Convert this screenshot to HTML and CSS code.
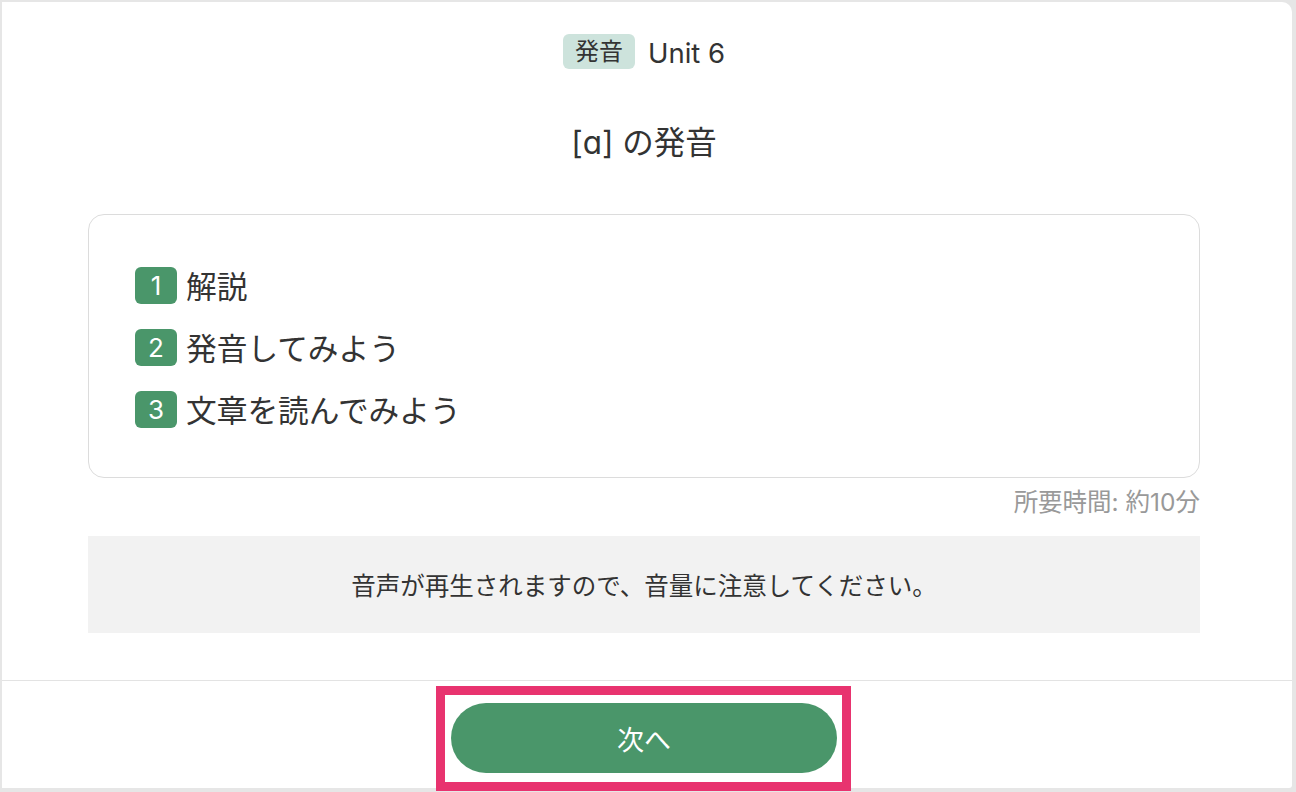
FILE: index.html
```html
<!DOCTYPE html>
<html lang="ja">
<head>
<meta charset="utf-8">
<title>[ɑ] の発音</title>
<link rel="stylesheet" href="styles.css">
</head>
<body>
<div class="panel">
  <div class="main">
    <div class="header">
      <span class="tag">発音</span>
      <span class="unit">Unit 6</span>
    </div>
    <h1 class="title">[ɑ] の発音</h1>
    <div class="card">
      <div class="step"><span class="num">1</span><span class="label">解説</span></div>
      <div class="step"><span class="num">2</span><span class="label">発音してみよう</span></div>
      <div class="step"><span class="num">3</span><span class="label">文章を読んでみよう</span></div>
    </div>
    <div class="duration">所要時間: 約10分</div>
    <div class="notice">音声が再生されますので、音量に注意してください。</div>
  </div>
  <div class="footer">
    <div class="btn-wrap">
      <button class="next">次へ</button>
      <div class="highlight"></div>
    </div>
  </div>
</div>
</body>
</html>
```
FILE: styles.css
```css
* { box-sizing: border-box; }
html, body { margin: 0; padding: 0; }
body {
  background: #e6e6e6;
  font-family: "Inter", "Noto Sans CJK JP", sans-serif;
  color: #333;
  width: 1296px;
  height: 792px;
  overflow: hidden;
  padding: 2px 4px 0 2px;
}
.panel {
  background: #fff;
  height: 786px;
  border-radius: 0 10px 3px 0;
  display: flex;
  flex-direction: column;
}
.main {
  padding: 32px 92px 0 86px;
  display: flex;
  flex-direction: column;
}
.header {
  height: 35px;
  display: flex;
  justify-content: center;
  align-items: center;
  gap: 13px;
}
.tag {
  background: #cde3dc;
  color: #333;
  font-size: 24px;
  height: 35px;
  line-height: 35px;
  padding: 0 12px;
  border-radius: 6px;
}
.unit {
  font-size: 27.5px;
  color: #333;
  position: relative;
  top: 1px;
}
.title {
  margin: 54px 0 0;
  font-weight: normal;
  font-size: 31.5px;
  line-height: 40px;
  text-align: center;
  color: #333;
}
.card {
  margin-top: 51px;
  height: 264px;
  border: 1px solid #dcdcdc;
  border-radius: 16px;
  padding: 52px 46px 0;
  display: flex;
  flex-direction: column;
  gap: 25px;
}
.step {
  display: flex;
  align-items: center;
  height: 37px;
  gap: 9px;
}
.num {
  width: 42px;
  height: 37px;
  border-radius: 6px;
  background: #4a966a;
  color: #fff;
  font-size: 26px;
  display: flex;
  align-items: center;
  justify-content: center;
}
.label {
  font-size: 30.7px;
  color: #333;
  position: relative;
  top: -1px;
}
.duration {
  margin-top: 9px;
  line-height: 30px;
  text-align: right;
  font-size: 24.5px;
  color: #999;
}
.notice {
  margin-top: 19px;
  height: 97px;
  background: #f2f2f2;
  display: flex;
  align-items: center;
  justify-content: center;
  font-size: 24.5px;
  color: #333;
}
.footer {
  margin-top: auto;
  border-top: 1px solid #e3e3e3;
  padding: 22px 92px 15px 86px;
  display: flex;
  justify-content: center;
}
.btn-wrap {
  position: relative;
  width: 386px;
  height: 70px;
}
.next {
  width: 386px;
  height: 70px;
  border: none;
  border-radius: 35px;
  background: #4a966a;
  color: #fff;
  font-family: "Inter", "Noto Sans CJK JP", sans-serif;
  font-size: 27px;
  padding: 0;
}
.highlight {
  position: absolute;
  top: -17px;
  left: -15px;
  right: -14px;
  bottom: -18px;
  border: 9px solid #e8336f;
  pointer-events: none;
}
```
